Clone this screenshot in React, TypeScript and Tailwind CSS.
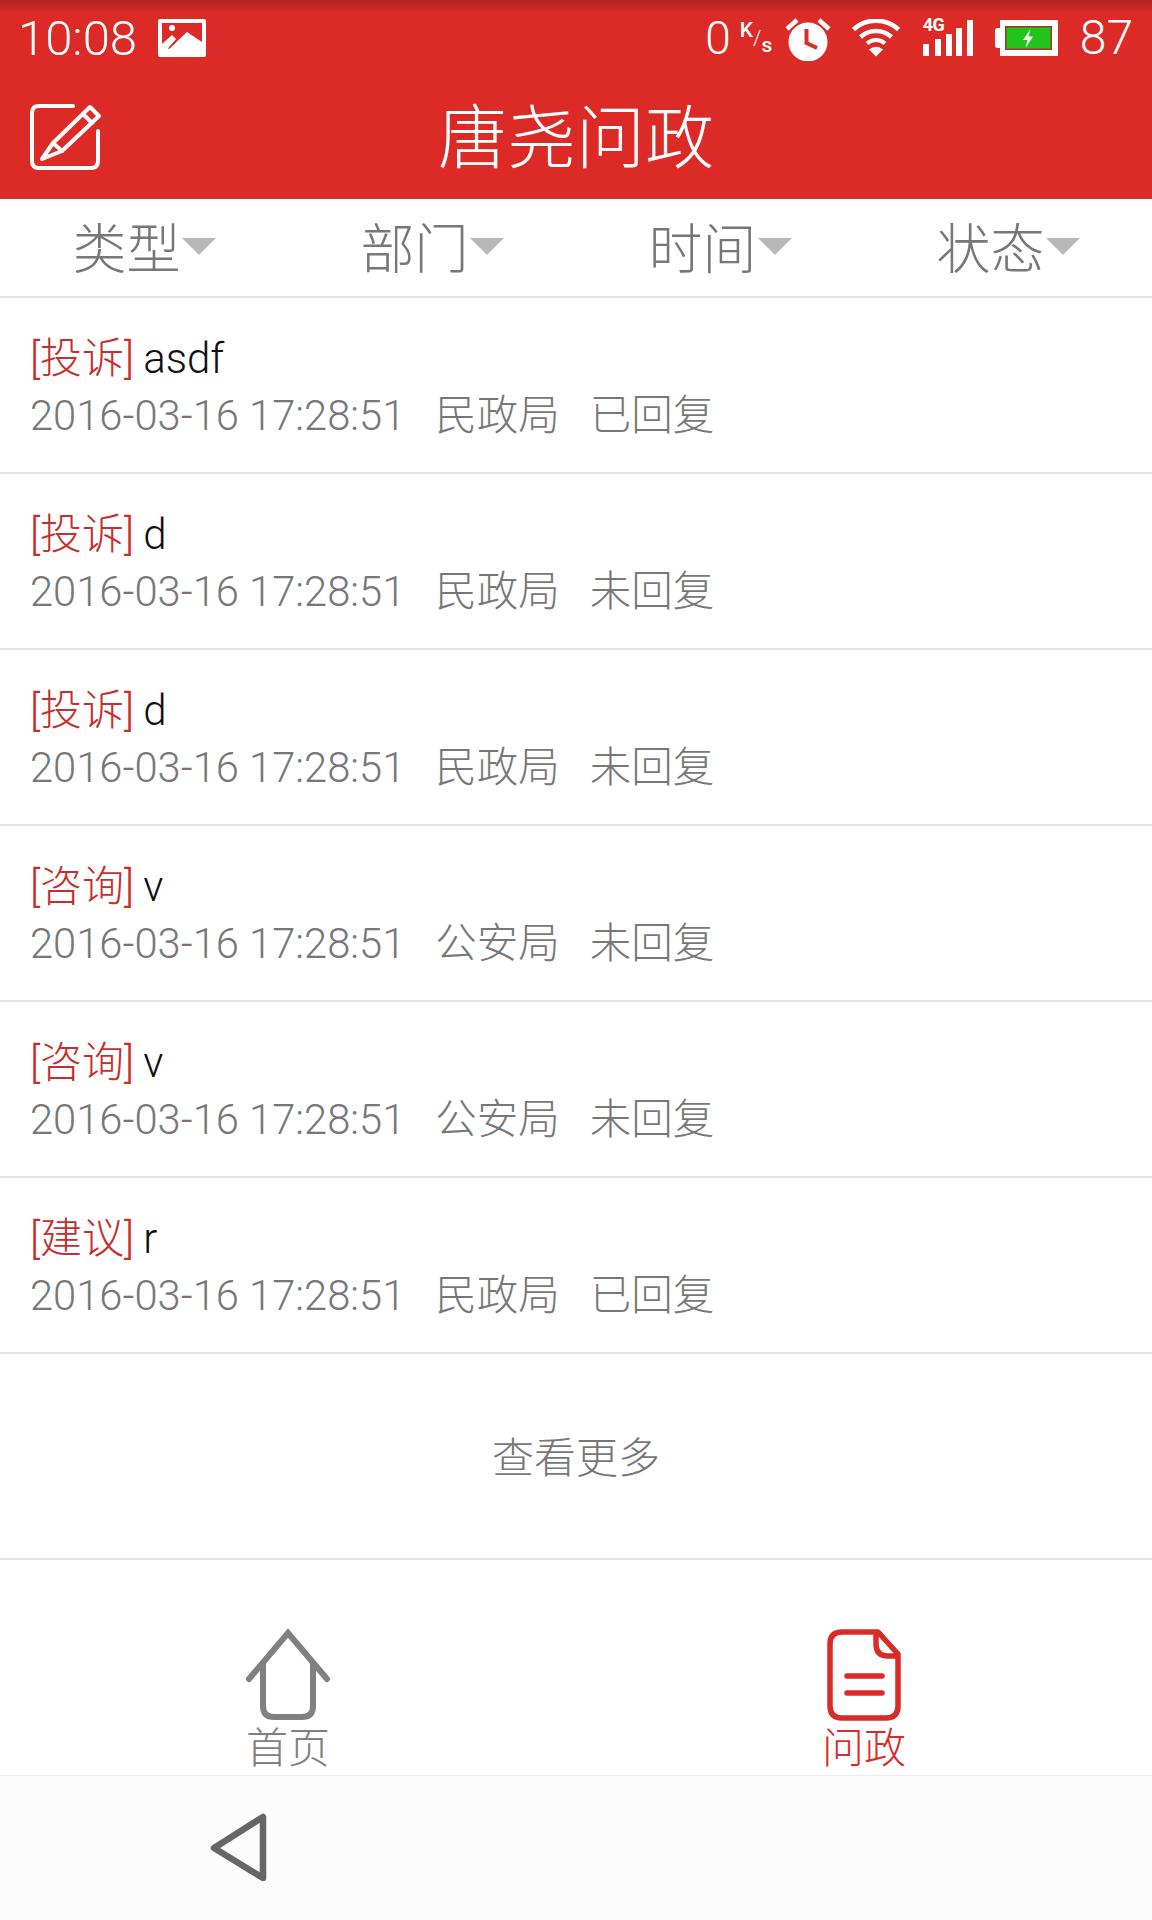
const sans = "font-['Roboto','Noto_Sans_CJK_SC',sans-serif]";

const filters = ["类型", "部门", "时间", "状态"];

const rows = [
  { tag: "[投诉]", title: "asdf", dept: "民政局", status: "已回复" },
  { tag: "[投诉]", title: "d", dept: "民政局", status: "未回复" },
  { tag: "[投诉]", title: "d", dept: "民政局", status: "未回复" },
  { tag: "[咨询]", title: "v", dept: "公安局", status: "未回复" },
  { tag: "[咨询]", title: "v", dept: "公安局", status: "未回复" },
  { tag: "[建议]", title: "r", dept: "民政局", status: "已回复" },
];

function PictureIcon() {
  return (
    <svg width="48" height="38" viewBox="0 0 48 38" className="ml-[21px]">
      <rect width="48" height="38" rx="2" fill="#fff" />
      <path d="M4 4H44V23L29 13L11 30L4 30Z" fill="#dc2b27" />
      <circle cx="14" cy="9" r="3" fill="#fff" />
      <path d="M4 25L14 16L18 20L10 30L4 32Z" fill="#fff" />
      <path d="M11 29L17 23" stroke="#dc2b27" strokeWidth="1.5" />
    </svg>
  );
}

function AlarmIcon() {
  return (
    <svg width="46" height="46" viewBox="0 0 46 46" className="ml-[18px]">
      <circle cx="23" cy="27" r="19.5" fill="#fff" />
      <path d="M2 14L12 5M44 14L34 5" stroke="#fff" strokeWidth="4.5" />
      <path d="M21.500 14V28L32 33" fill="none" stroke="#dc2b27" strokeWidth="4" />
    </svg>
  );
}

function WifiIcon() {
  return (
    <svg width="50" height="38" viewBox="0 0 50 38" className="ml-[20px]">
      <path d="M2.500 10.500A33 33 0 0 1 47.500 10.500" fill="none" stroke="#fff" strokeWidth="4.500" />
      <path d="M9.500 18A23 23 0 0 1 40.500 18" fill="none" stroke="#fff" strokeWidth="4.500" />
      <path d="M16 24.500A13.500 13.500 0 0 1 34 24.500" fill="none" stroke="#fff" strokeWidth="4" />
      <path d="M25 37.500L18 30.500A10 10 0 0 1 32 30.500Z" fill="#fff" />
    </svg>
  );
}

function SignalIcon() {
  return (
    <div className="relative ml-[22px] h-[38px] w-[50px]">
      <span className="absolute left-0 top-[-3px] font-['Roboto'] text-[18px] font-bold leading-[18px] tracking-[-0.5px] text-white">
        4G
      </span>
      <svg width="50" height="38" viewBox="0 0 50 38" className="block">
        <path d="M0 25h6v12H0zM12 20h6v17h-6zM23 15h6v22h-6zM33 9h6v28h-6zM44 1h6v36h-6z" fill="#fff" />
      </svg>
    </div>
  );
}

function BatteryIcon() {
  return (
    <svg width="63" height="36" viewBox="0 0 63 36" className="ml-[22px]">
      <path d="M5 8H2.500Q0 8 0 11V25Q0 28 2.500 28H5Z" fill="#fff" />
      <rect x="5" width="58" height="36" fill="#fff" />
      <rect x="10" y="6" width="47" height="24" fill="#a5322a" />
      <rect x="11.500" y="7.500" width="44" height="21" fill="#22c41a" />
      <path d="M35.500 9L28 20H32.500L30.500 28L38 16.500H33.500Z" fill="#fff" />
    </svg>
  );
}

function StatusBar() {
  return (
    <div className="flex h-[76px] items-center justify-between bg-[linear-gradient(#b32420,#dc2b27_14px)] pl-[18px] pr-[19px] text-white">
      <div className="flex items-center">
        <span className="font-['Roboto'] text-[49px] font-light leading-none">10:08</span>
        <PictureIcon />
      </div>
      <div className="flex items-center">
        <span className="font-['Roboto'] text-[46px] font-light leading-none">0</span>
        <div className="ml-[9px] mr-[2px] flex h-[36px] w-[25px] font-['Roboto'] text-[21px] font-medium leading-none">
          <span className="self-start">K</span>
          <span className="self-center font-light">/</span>
          <span className="self-end">s</span>
        </div>
        <AlarmIcon />
        <WifiIcon />
        <SignalIcon />
        <BatteryIcon />
        <span className="ml-[22px] font-['Roboto'] text-[48px] font-light leading-none">87</span>
      </div>
    </div>
  );
}

function ComposeIcon() {
  return (
    <svg width="72" height="68" viewBox="0 0 72 68" fill="none" stroke="#fff" strokeWidth="4" strokeLinejoin="round" strokeLinecap="round" className="mb-[2px] ml-[29px]">
      <path d="M44 3H10Q3 3 3 10V58Q3 65 10 65H62Q69 65 69 58V28" />
      <path d="M13 56L24 40L61 4L70 13L33 48Z" />
      <path d="M54 11L63 20M24 40L33 48" />
    </svg>
  );
}

function HomeIcon() {
  return (
    <svg width="88" height="94" viewBox="0 0 88 94" fill="none" stroke="#808080" strokeWidth="6">
      <path d="M5 51L44 5L83 51" strokeLinecap="round" />
      <path d="M19 33V78Q19 89 30 89H58Q69 89 69 78V33" />
    </svg>
  );
}

function DocIcon() {
  return (
    <svg width="76" height="94" viewBox="0 0 76 94" fill="none" stroke="#d92c28" strokeWidth="5.500">
      <path d="M52 4H16Q4 4 4 16V78Q4 90 16 90H60Q72 90 72 78V26Z" strokeLinejoin="round" />
      <path d="M50 4V16Q50 28 62 28H72" />
      <path d="M21 48H56M21 65H56" strokeLinecap="round" />
    </svg>
  );
}

function BackIcon() {
  return (
    <svg width="60" height="72" viewBox="0 0 60 72" fill="none" stroke="#666" strokeWidth="6.500" strokeLinejoin="round">
      <path d="M6 36L55 5V66Z" />
    </svg>
  );
}

function FilterBar() {
  return (
    <div className="flex h-[99px] border-b-2 border-[#e4e4e4]">
      {filters.map((label) => (
        <div key={label} className="flex flex-1 items-center justify-center pt-[6px] text-[54px] font-light leading-none text-[#777]">
          <span>{label}</span>
          <span className="ml-[1px] mb-[8px] h-0 w-0 border-x-[17px] border-t-[17px] border-x-transparent border-t-[#b8b8b8]" />
        </div>
      ))}
    </div>
  );
}

function ListRow({ tag, title, dept, status }: (typeof rows)[number]) {
  return (
    <div className="flex h-[176px] flex-col border-b-2 border-[#e4e4e4] pl-[30px] pt-[33px]">
      <div className="flex h-[56px] items-center text-[42px] leading-none">
        <span className="font-light text-[#c62f2b]">{tag}</span>
        <span className="ml-[9px] font-light text-[#111]">{title}</span>
      </div>
      <div className="flex h-[56px] items-center pt-[2px] font-light leading-none text-[#777]">
        <span className="text-[41.7px]">2016-03-16 17:28:51</span>
        <span className="ml-[30px] text-[41.5px]">{dept}</span>
        <span className="ml-[30px] text-[41.5px]">{status}</span>
      </div>
    </div>
  );
}

export default function App() {
  return (
    <div className={`${sans} flex h-[1920px] w-[1152px] flex-col overflow-hidden bg-white`}>
      <header className="bg-[#dc2b27]">
        <StatusBar />
        <div className="grid h-[123px] grid-cols-[1fr_auto_1fr] items-center text-white">
          <ComposeIcon />
          <h1 className="pt-[4px] text-[69px] font-light leading-none">唐尧问政</h1>
        </div>
      </header>
      <FilterBar />
      {rows.map((row, i) => (
        <ListRow key={i} {...row} />
      ))}
      <div className="flex h-[206px] items-center justify-center border-b-2 border-[#e4e4e4] pt-[4px] text-[42px] font-light text-[#777]">
        查看更多
      </div>
      <nav className="flex h-[216px] border-b border-[#ececec] pt-[68px]">
        <div className="flex flex-1 flex-col items-center text-[#808080]">
          <HomeIcon />
          <span className="mt-[5px] text-[42px] font-light leading-[44px]">首页</span>
        </div>
        <div className="flex flex-1 flex-col items-center text-[#d92c28]">
          <DocIcon />
          <span className="mt-[5px] text-[42px] font-light leading-[44px]">问政</span>
        </div>
      </nav>
      <div className="flex flex-1 items-center bg-[#fcfcfc] pl-[208px]">
        <BackIcon />
      </div>
    </div>
  );
}
